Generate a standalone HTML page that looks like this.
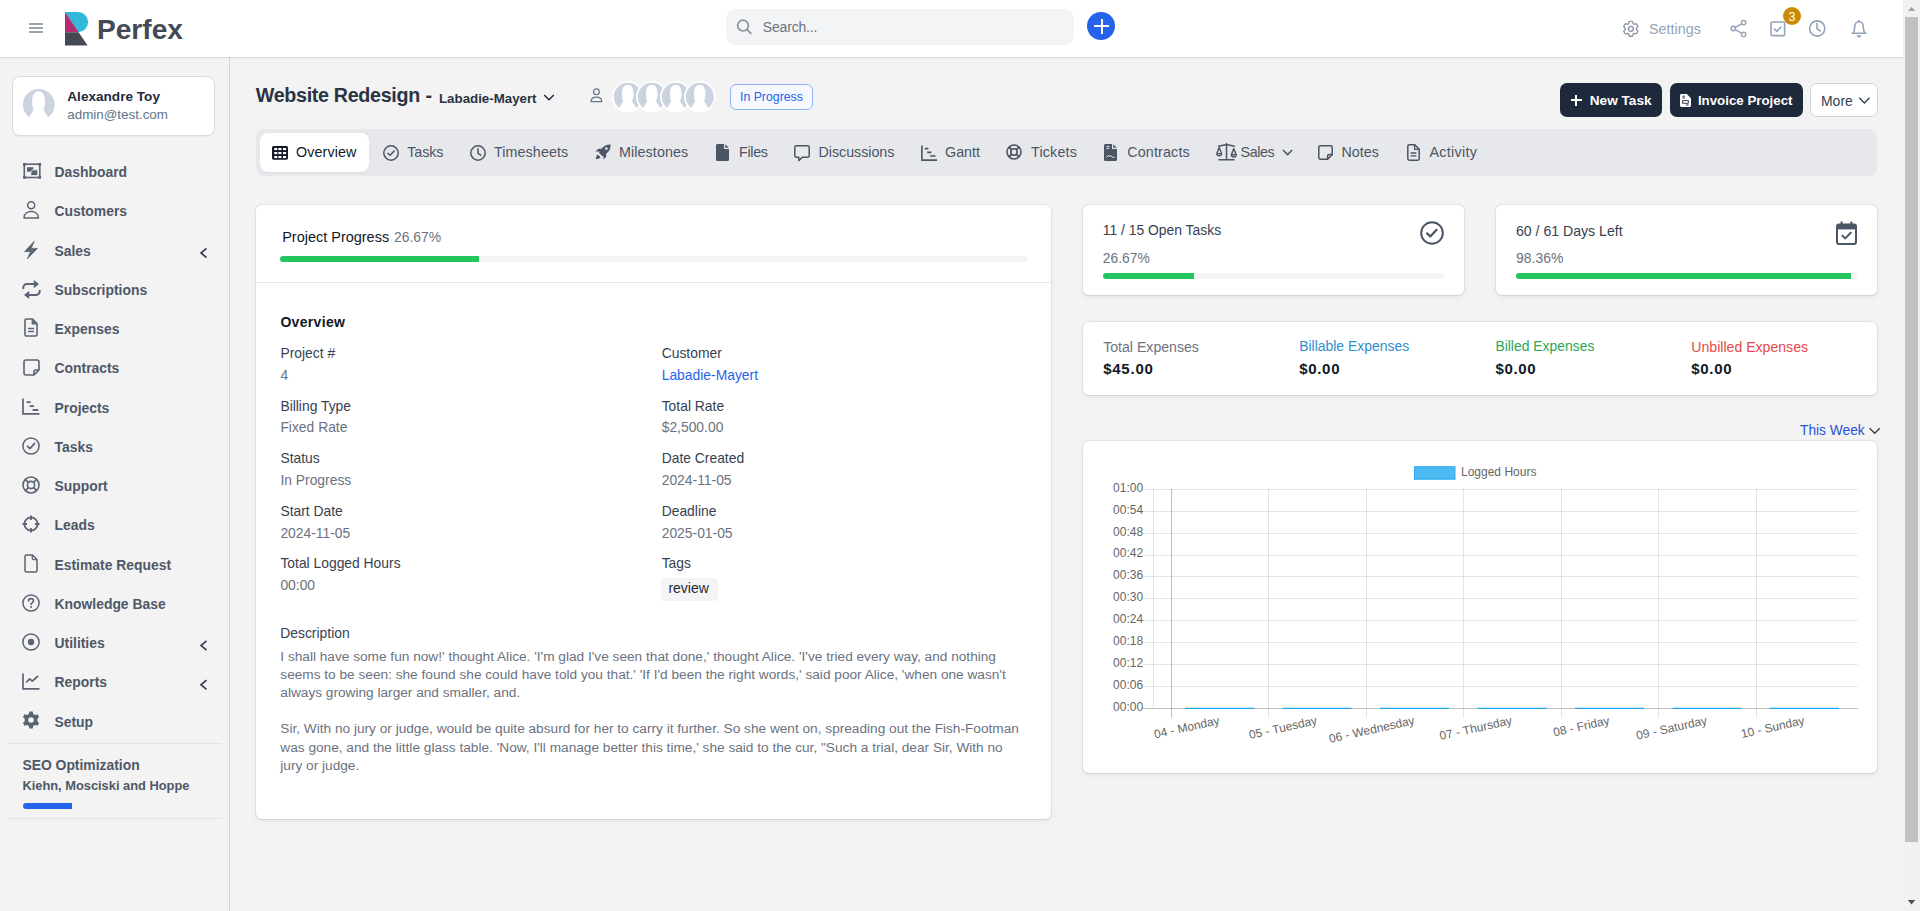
<!DOCTYPE html>
<html><head><meta charset="utf-8">
<style>
*{box-sizing:border-box;margin:0;padding:0}
html,body{width:1920px;height:911px;overflow:hidden}
body{font-family:"Liberation Sans",sans-serif;background:#f3f3f3;position:relative}
.t{position:absolute;white-space:nowrap}
.a{position:absolute}
svg{position:absolute;overflow:visible}
</style></head><body>
<div class="a" style="left:229px;top:57px;width:1px;height:854px;background:#cbd5e1"></div>
<div class="a" style="left:0;top:0;width:1903px;height:57px;background:#fff;box-shadow:0 1px 0 rgba(0,0,0,0.065),0 1px 3px rgba(0,0,0,0.06)"></div>
<div class="a" style="left:29px;top:23px;width:14px;height:2px;background:#9ca3af"></div><div class="a" style="left:29px;top:27px;width:14px;height:2px;background:#9ca3af"></div><div class="a" style="left:29px;top:31px;width:14px;height:2px;background:#9ca3af"></div>
<svg style="left:0;top:0" width="200" height="57">
<path d="M65 12 H78 A10.1 10.1 0 0 1 78 32.2 Z" fill="#31b8da"/>
<path d="M65 12 L78.6 32.2 L65 32.2 Z" fill="#b72a74"/>
<path d="M65 32.2 L78.6 32.2 L87.6 45.5 L65 45.5 Z" fill="#434a54"/>
</svg>
<div class="t " style="left:97px;top:16.01px;font-size:28.1px;line-height:28.1px;color:#434a54;font-weight:700;">Perfex</div>
<div class="a" style="left:726px;top:9px;width:348px;height:36px;background:#f3f4f6;border-radius:10px"></div>
<svg style="left:0;top:0" width="800" height="57"><circle cx="743" cy="25.6" r="5.4" fill="none" stroke="#8b93a1" stroke-width="1.7"/><path d="M747 29.6 L750.8 33.4" stroke="#8b93a1" stroke-width="1.9" stroke-linecap="round"/></svg>
<div class="t " style="left:762.8px;top:20.05px;font-size:14px;line-height:14px;color:#6b7280;letter-spacing:-0.18px;">Search...</div>
<div class="a" style="left:1087px;top:12px;width:28px;height:28px;border-radius:50%;background:#2563eb"></div><div class="a" style="left:1094px;top:25px;width:15px;height:2px;background:#fff"></div><div class="a" style="left:1100.5px;top:18.5px;width:2px;height:15px;background:#fff"></div>
<svg style="left:1621.15px;top:19px" width="19.7" height="19.7" viewBox="0 0 24 24" fill="none" stroke="#8b95a5" stroke-width="1.6"><path d="M9.594 3.94c.09-.542.56-.94 1.11-.94h2.593c.55 0 1.02.398 1.11.94l.213 1.281c.063.374.313.686.645.87.074.04.147.083.22.127.325.196.72.257 1.075.124l1.217-.456a1.125 1.125 0 0 1 1.37.49l1.296 2.247a1.125 1.125 0 0 1-.26 1.431l-1.003.827c-.293.241-.438.613-.43.992a7.723 7.723 0 0 1 0 .255c-.008.378.137.75.43.991l1.004.827c.424.35.534.955.26 1.43l-1.298 2.247a1.125 1.125 0 0 1-1.369.491l-1.217-.456c-.355-.133-.75-.072-1.076.124a6.47 6.47 0 0 1-.22.128c-.331.183-.581.495-.644.869l-.213 1.281c-.09.543-.56.94-1.11.94h-2.594c-.55 0-1.019-.398-1.11-.94l-.213-1.281c-.062-.374-.312-.686-.644-.87a6.52 6.52 0 0 1-.22-.127c-.325-.196-.72-.257-1.076-.124l-1.217.456a1.125 1.125 0 0 1-1.369-.49l-1.297-2.247a1.125 1.125 0 0 1 .26-1.431l1.004-.827c.292-.24.437-.613.43-.991a6.932 6.932 0 0 1 0-.255c.007-.38-.138-.751-.43-.992l-1.004-.827a1.125 1.125 0 0 1-.26-1.43l1.297-2.247a1.125 1.125 0 0 1 1.37-.491l1.216.456c.356.133.751.072 1.076-.124.072-.044.146-.086.22-.128.332-.183.582-.495.644-.869l.214-1.28Z"/><circle cx="12" cy="12" r="3"/></svg>
<div class="t " style="left:1649px;top:21.71px;font-size:14.4px;line-height:14.4px;color:#94a3b8;">Settings</div>
<svg style="left:0;top:0" width="1903" height="57" fill="none" stroke="#94a3b8" stroke-width="1.4">
<circle cx="1743.6" cy="22.6" r="2.2"/><circle cx="1733.3" cy="28.5" r="2.2"/><circle cx="1743.6" cy="34.4" r="2.2"/>
<path d="M1735.3 27.4 L1741.6 23.8 M1735.3 29.6 L1741.6 33.2"/>
<rect x="1771" y="22" width="13.6" height="13.6" rx="1" stroke-width="1.6"/>
<path d="M1774.4 29 L1776.8 31.4 L1781 27" stroke-width="1.6" stroke-linecap="round" stroke-linejoin="round"/>
<circle cx="1817.2" cy="28.5" r="7.6" stroke-width="1.6"/>
<path d="M1817 23.5 V28.7 L1820.3 31" stroke-width="1.6" stroke-linecap="round"/>
<path d="M1853.2 33.1 C1854.6 31.2 1854.7 29 1854.7 26.9 C1854.7 23.8 1856.6 21.7 1859 21.7 C1861.4 21.7 1863.3 23.8 1863.3 26.9 C1863.3 29 1863.4 31.2 1864.8 33.1" stroke-width="1.6" stroke-linejoin="round"/><path d="M1852 33.3 H1866" stroke-width="1.6" stroke-linecap="round"/><path d="M1859 19.9 V21.7" stroke-width="1.6"/><path d="M1856.7 35.3 A2.3 2.3 0 0 0 1861.3 35.3 Z" fill="#94a3b8" stroke="none"/>
</svg>
<div class="a" style="left:1783px;top:7px;width:18px;height:18px;border-radius:50%;background:#ca8a04"></div><div class="t " style="left:1788.8px;top:11.14px;font-size:12px;line-height:12px;color:#fff;">3</div>
<div class="a" style="left:1903px;top:0;width:17px;height:911px;background:#f1f1f1"></div><div class="a" style="left:1905px;top:17px;width:13px;height:825px;background:#c1c1c1"></div><svg style="left:0;top:0" width="1920" height="911"><path d="M1907.8 11 L1911.5 6.8 L1915.2 11 Z" fill="#a3a3a3"/><path d="M1907.8 900 L1915.2 900 L1911.5 904.4 Z" fill="#505050"/></svg>
<div class="a" style="left:12px;top:76px;width:203px;height:60px;background:#fff;border:1px solid #d7dde5;border-radius:8px;box-shadow:0 1px 2px rgba(0,0,0,0.05)"></div>
<svg style="left:22.25px;top:88.25px" width="33.5" height="33.5" viewBox="-16.75 -16.75 33.5 33.5"><clipPath id="c390_1050"><circle cx="0" cy="0" r="16.75"/></clipPath><circle cx="0" cy="0" r="15.75" fill="#cbd3e1"/><g clip-path="url(#c390_1050)"><path d="M-5.20 4.88 C-5.99 3.15 -6.61 0.79 -6.61 -3.94 C-6.61 -10.40 -3.46 -13.54 0.00 -13.54 C3.46 -13.54 6.30 -10.40 6.30 -3.94 C6.30 0.79 5.67 3.15 4.88 4.88 C6.30 7.56 7.88 10.08 9.77 12.91 L18.90 12.91 L18.90 20.48 L-18.90 20.48 L-18.90 12.91 L-10.08 12.91 C-8.19 10.08 -6.61 7.56 -5.20 4.88 Z" fill="#fff"/></g></svg>
<div class="t " style="left:67.3px;top:90.19px;font-size:13.6px;line-height:13.6px;color:#1e293b;font-weight:700;">Alexandre Toy</div>
<div class="t " style="left:67.3px;top:108.36px;font-size:13.4px;line-height:13.4px;color:#64748b;">admin@test.com</div>
<div class="t " style="left:54.5px;top:166.13px;font-size:13.9px;line-height:13.9px;color:#4e5868;font-weight:700;">Dashboard</div>
<div class="t " style="left:54.5px;top:205.38px;font-size:13.9px;line-height:13.9px;color:#4e5868;font-weight:700;">Customers</div>
<div class="t " style="left:54.5px;top:244.63px;font-size:13.9px;line-height:13.9px;color:#4e5868;font-weight:700;">Sales</div>
<svg style="left:0;top:0" width="229" height="911"><path d="M206.5 248.4 L201 253.0 L206.5 257.6" fill="none" stroke="#374151" stroke-width="1.7"/></svg>
<div class="t " style="left:54.5px;top:283.88px;font-size:13.9px;line-height:13.9px;color:#4e5868;font-weight:700;">Subscriptions</div>
<div class="t " style="left:54.5px;top:323.13px;font-size:13.9px;line-height:13.9px;color:#4e5868;font-weight:700;">Expenses</div>
<div class="t " style="left:54.5px;top:362.38px;font-size:13.9px;line-height:13.9px;color:#4e5868;font-weight:700;">Contracts</div>
<div class="t " style="left:54.5px;top:401.63px;font-size:13.9px;line-height:13.9px;color:#4e5868;font-weight:700;">Projects</div>
<div class="t " style="left:54.5px;top:440.88px;font-size:13.9px;line-height:13.9px;color:#4e5868;font-weight:700;">Tasks</div>
<div class="t " style="left:54.5px;top:480.13px;font-size:13.9px;line-height:13.9px;color:#4e5868;font-weight:700;">Support</div>
<div class="t " style="left:54.5px;top:519.38px;font-size:13.9px;line-height:13.9px;color:#4e5868;font-weight:700;">Leads</div>
<div class="t " style="left:54.5px;top:558.63px;font-size:13.9px;line-height:13.9px;color:#4e5868;font-weight:700;">Estimate Request</div>
<div class="t " style="left:54.5px;top:597.88px;font-size:13.9px;line-height:13.9px;color:#4e5868;font-weight:700;">Knowledge Base</div>
<div class="t " style="left:54.5px;top:637.13px;font-size:13.9px;line-height:13.9px;color:#4e5868;font-weight:700;">Utilities</div>
<svg style="left:0;top:0" width="229" height="911"><path d="M206.5 640.9 L201 645.5 L206.5 650.1" fill="none" stroke="#374151" stroke-width="1.7"/></svg>
<div class="t " style="left:54.5px;top:676.38px;font-size:13.9px;line-height:13.9px;color:#4e5868;font-weight:700;">Reports</div>
<svg style="left:0;top:0" width="229" height="911"><path d="M206.5 680.15 L201 684.75 L206.5 689.35" fill="none" stroke="#374151" stroke-width="1.7"/></svg>
<div class="t " style="left:54.5px;top:715.63px;font-size:13.9px;line-height:13.9px;color:#4e5868;font-weight:700;">Setup</div>
<svg style="left:23px;top:163px" width="18" height="16" viewBox="0 0 18 16" ><rect x="1.3" y="1.2" width="15.5" height="13.3" fill="none" stroke="#5b6474" stroke-width="1.6"/><rect x="0" y="0" width="2.8" height="2.8" rx="0.6" fill="#5b6474"/><rect x="15.3" y="0" width="2.8" height="2.8" rx="0.6" fill="#5b6474"/><rect x="0" y="12.9" width="2.8" height="2.8" rx="0.6" fill="#5b6474"/><rect x="15.3" y="12.9" width="2.8" height="2.8" rx="0.6" fill="#5b6474"/><rect x="4" y="4.2" width="6.3" height="4.5" fill="#5b6474"/><path d="M7.8 10.5 C7.8 8.2 8.8 6.8 11 6.8 H14.8 V12.6 H7.8 Z" fill="#5b6474" stroke="#f3f3f3" stroke-width="0.9"/></svg>
<svg style="left:23px;top:201px" width="17" height="18" viewBox="0 0 17 18" ><circle cx="8.2" cy="4.2" r="3.5" fill="none" stroke="#5b6474" stroke-width="1.5"/><path d="M1 16.9 C1 12.5 4.5 10.6 8.2 10.6 C11.9 10.6 15.4 12.5 15.4 16.9 Z" fill="none" stroke="#5b6474" stroke-width="1.5" stroke-linejoin="round"/></svg>
<svg style="left:24px;top:241px" width="14" height="18" viewBox="0 0 14 18" ><path d="M10.2 0.3 L0.6 10.6 H6.6 L3.3 17.9 L13.4 7.4 H7.2 Z" fill="#5b6474" stroke="#5b6474" stroke-width="0.8" stroke-linejoin="round"/></svg>
<svg style="left:21.5px;top:280px" width="19" height="19" viewBox="0 0 19 19" ><path d="M1.3 8.2 V7.5 C1.3 5.6 2.8 4.1 4.7 4.1 H14.5" fill="none" stroke="#5b6474" stroke-width="2" stroke-linecap="round"/><path d="M12.2 0.8 L16.4 4.1 L12.2 7.4 Z" fill="#5b6474" stroke="#5b6474" stroke-width="1" stroke-linejoin="round"/><path d="M17.7 10.8 V11.5 C17.7 13.4 16.2 14.9 14.3 14.9 H4.5" fill="none" stroke="#5b6474" stroke-width="2" stroke-linecap="round"/><path d="M6.8 11.6 L2.6 14.9 L6.8 18.2 Z" fill="#5b6474" stroke="#5b6474" stroke-width="1" stroke-linejoin="round"/></svg>
<svg style="left:24px;top:318px" width="14" height="19" viewBox="0 0 14 19" ><path d="M1 2.5 C1 1.6 1.6 1 2.5 1 H8.5 L13 5.5 V16.5 C13 17.4 12.4 18 11.5 18 H2.5 C1.6 18 1 17.4 1 16.5 Z" fill="none" stroke="#5b6474" stroke-width="1.6" stroke-linejoin="round"/><path d="M8.2 1 V5.8 H13" fill="#5b6474" stroke="#5b6474" stroke-width="1.2"/><path d="M4 10.5 H10 M4 13.5 H10" stroke="#5b6474" stroke-width="1.6"/></svg>
<svg style="left:23px;top:359px" width="17" height="17" viewBox="0 0 17 17" ><path d="M1 3 C1 1.9 1.9 1 3 1 H14 C15.1 1 16 1.9 16 3 V11 L11 16 H3 C1.9 16 1 15.1 1 14 Z" fill="none" stroke="#5b6474" stroke-width="1.6" stroke-linejoin="round"/><path d="M16 11 H13 C11.9 11 11 11.9 11 13 V16" fill="none" stroke="#5b6474" stroke-width="1.6"/></svg>
<svg style="left:22px;top:398px" width="18" height="17" viewBox="0 0 18 17" ><path d="M1 0.5 V15.8 H17.5" fill="none" stroke="#5b6474" stroke-width="1.7"/><path d="M4.6 4.2 H8.6 M7.6 8.2 H12 M10.6 12 H16.2" stroke="#5b6474" stroke-width="1.8"/></svg>
<svg style="left:22px;top:437px" width="18" height="18" viewBox="0 0 18 18" ><circle cx="9" cy="9" r="8.1" fill="none" stroke="#5b6474" stroke-width="1.5"/><path d="M5.3 9.2 L7.9 11.6 L12.6 6.4" fill="none" stroke="#5b6474" stroke-width="1.6" stroke-linecap="round" stroke-linejoin="round"/></svg>
<svg style="left:22px;top:476px" width="18" height="18" viewBox="0 0 18 18" ><circle cx="9" cy="9" r="8" fill="none" stroke="#5b6474" stroke-width="1.6"/><circle cx="9" cy="9" r="3.6" fill="none" stroke="#5b6474" stroke-width="1.6"/><path d="M3.3 3.3 L6.4 6.4 M14.7 3.3 L11.6 6.4 M3.3 14.7 L6.4 11.6 M14.7 14.7 L11.6 11.6" stroke="#5b6474" stroke-width="1.7"/></svg>
<svg style="left:22px;top:515px" width="18" height="18" viewBox="0 0 18 18" ><circle cx="9" cy="9" r="6.6" fill="none" stroke="#5b6474" stroke-width="1.8"/><path d="M9 0.5 V5 M9 13 V17.5 M0.5 9 H5 M13 9 H17.5" stroke="#5b6474" stroke-width="1.8"/></svg>
<svg style="left:24px;top:554px" width="14" height="19" viewBox="0 0 14 19" ><path d="M1 2.5 C1 1.6 1.6 1 2.5 1 H8.5 L13 5.5 V16.5 C13 17.4 12.4 18 11.5 18 H2.5 C1.6 18 1 17.4 1 16.5 Z" fill="none" stroke="#5b6474" stroke-width="1.5" stroke-linejoin="round"/><path d="M8.3 1 V4.3 C8.3 5 8.8 5.6 9.6 5.6 H13" fill="none" stroke="#5b6474" stroke-width="1.3"/></svg>
<svg style="left:22px;top:594px" width="18" height="18" viewBox="0 0 18 18" ><circle cx="9" cy="9" r="8.1" fill="none" stroke="#5b6474" stroke-width="1.5"/><path d="M6.6 7 C6.6 5.5 7.7 4.6 9 4.6 C10.4 4.6 11.5 5.5 11.5 6.8 C11.5 8.5 9.1 8.7 9.1 10.4" fill="none" stroke="#5b6474" stroke-width="1.6" stroke-linecap="round"/><circle cx="9.1" cy="13" r="1" fill="#5b6474"/></svg>
<svg style="left:22px;top:633px" width="18" height="18" viewBox="0 0 18 18" ><circle cx="9" cy="9" r="8.1" fill="none" stroke="#5b6474" stroke-width="1.5"/><circle cx="9" cy="9" r="3.2" fill="#5b6474"/></svg>
<svg style="left:22px;top:673px" width="18" height="17" viewBox="0 0 18 17" ><path d="M1 0.5 V15.8 H17.5" fill="none" stroke="#5b6474" stroke-width="1.7"/><path d="M4.2 9.5 L7.6 5.8 L10.3 8.2 L16 3" fill="none" stroke="#5b6474" stroke-width="1.7" stroke-linejoin="round"/></svg>
<svg style="left:22px;top:711px" width="18" height="18" viewBox="0 0 18 18" ><path fill="#5b6474" d="M7.3 0.5 H10.7 L11.2 2.9 C11.9 3.2 12.5 3.5 13.1 4 L15.4 3.2 L17.1 6.1 L15.3 7.7 C15.4 8.5 15.4 9.5 15.3 10.3 L17.1 11.9 L15.4 14.8 L13.1 14 C12.5 14.5 11.9 14.8 11.2 15.1 L10.7 17.5 H7.3 L6.8 15.1 C6.1 14.8 5.5 14.5 4.9 14 L2.6 14.8 L0.9 11.9 L2.7 10.3 C2.6 9.5 2.6 8.5 2.7 7.7 L0.9 6.1 L2.6 3.2 L4.9 4 C5.5 3.5 6.1 3.2 6.8 2.9 Z M9 6.2 A2.8 2.8 0 1 0 9 11.8 A2.8 2.8 0 1 0 9 6.2 Z"/></svg>
<div class="a" style="left:7px;top:743px;width:215px;height:1px;background:#dfe3e8"></div>
<div class="t " style="left:22.4px;top:758.93px;font-size:13.9px;line-height:13.9px;color:#4e5868;font-weight:700;">SEO Optimization</div>
<div class="t " style="left:22.4px;top:779.92px;font-size:12.85px;line-height:12.85px;color:#4e5868;font-weight:700;">Kiehn, Mosciski and Hoppe</div>
<div class="a" style="left:23px;top:803px;width:49px;height:6px;background:#2563eb;border-radius:3px 0 0 3px"></div>
<div class="a" style="left:7px;top:818px;width:215px;height:1px;background:#dfe3e8"></div>
<div class="t " style="left:255.8px;top:85.92px;font-size:19.7px;line-height:19.7px;color:#2a3444;font-weight:700;letter-spacing:-0.32px;">Website Redesign</div>
<div class="t " style="left:425.5px;top:85.92px;font-size:19.7px;line-height:19.7px;color:#2a3444;font-weight:700;">-</div>
<div class="t " style="left:439px;top:91.74px;font-size:13.3px;line-height:13.3px;color:#2a3444;font-weight:700;">Labadie-Mayert</div>
<svg style="left:0;top:0" width="600" height="130"><path d="M544.2 95 L549 99.8 L553.8 95" fill="none" stroke="#1e293b" stroke-width="1.5"/></svg>
<svg style="left:590px;top:88px" width="13" height="15" viewBox="0 0 13 15" ><circle cx="6.4" cy="3.7" r="2.9" fill="none" stroke="#64748b" stroke-width="1.25"/><path d="M1 13.6 C1 10.4 3.6 9.1 6.4 9.1 C9.2 9.1 11.8 10.4 11.8 13.6 Z" fill="none" stroke="#64748b" stroke-width="1.25" stroke-linejoin="round"/></svg>
<svg style="left:610.6px;top:80.2px" width="33.6" height="33.6" viewBox="-16.8 -16.8 33.6 33.6"><circle cx="0" cy="0" r="15.8" fill="#fff"/><clipPath id="c6274_970"><circle cx="0" cy="0" r="15"/></clipPath><circle cx="0" cy="0" r="14" fill="#cbd3e1"/><g clip-path="url(#c6274_970)"><path d="M-4.62 4.34 C-5.32 2.80 -5.88 0.70 -5.88 -3.50 C-5.88 -9.24 -3.08 -12.04 0.00 -12.04 C3.08 -12.04 5.60 -9.24 5.60 -3.50 C5.60 0.70 5.04 2.80 4.34 4.34 C5.60 6.72 7.00 8.96 8.68 11.48 L16.80 11.48 L16.80 18.20 L-16.80 18.20 L-16.80 11.48 L-8.96 11.48 C-7.28 8.96 -5.88 6.72 -4.62 4.34 Z" fill="#fff"/></g></svg>
<svg style="left:634.75px;top:80.2px" width="33.6" height="33.6" viewBox="-16.8 -16.8 33.6 33.6"><circle cx="0" cy="0" r="15.8" fill="#fff"/><clipPath id="c6515_970"><circle cx="0" cy="0" r="15"/></clipPath><circle cx="0" cy="0" r="14" fill="#cbd3e1"/><g clip-path="url(#c6515_970)"><path d="M-4.62 4.34 C-5.32 2.80 -5.88 0.70 -5.88 -3.50 C-5.88 -9.24 -3.08 -12.04 0.00 -12.04 C3.08 -12.04 5.60 -9.24 5.60 -3.50 C5.60 0.70 5.04 2.80 4.34 4.34 C5.60 6.72 7.00 8.96 8.68 11.48 L16.80 11.48 L16.80 18.20 L-16.80 18.20 L-16.80 11.48 L-8.96 11.48 C-7.28 8.96 -5.88 6.72 -4.62 4.34 Z" fill="#fff"/></g></svg>
<svg style="left:658.9px;top:80.2px" width="33.6" height="33.6" viewBox="-16.8 -16.8 33.6 33.6"><circle cx="0" cy="0" r="15.8" fill="#fff"/><clipPath id="c6756_970"><circle cx="0" cy="0" r="15"/></clipPath><circle cx="0" cy="0" r="14" fill="#cbd3e1"/><g clip-path="url(#c6756_970)"><path d="M-4.62 4.34 C-5.32 2.80 -5.88 0.70 -5.88 -3.50 C-5.88 -9.24 -3.08 -12.04 0.00 -12.04 C3.08 -12.04 5.60 -9.24 5.60 -3.50 C5.60 0.70 5.04 2.80 4.34 4.34 C5.60 6.72 7.00 8.96 8.68 11.48 L16.80 11.48 L16.80 18.20 L-16.80 18.20 L-16.80 11.48 L-8.96 11.48 C-7.28 8.96 -5.88 6.72 -4.62 4.34 Z" fill="#fff"/></g></svg>
<svg style="left:683.05px;top:80.2px" width="33.6" height="33.6" viewBox="-16.8 -16.8 33.6 33.6"><circle cx="0" cy="0" r="15.8" fill="#fff"/><clipPath id="c6998_970"><circle cx="0" cy="0" r="15"/></clipPath><circle cx="0" cy="0" r="14" fill="#cbd3e1"/><g clip-path="url(#c6998_970)"><path d="M-4.62 4.34 C-5.32 2.80 -5.88 0.70 -5.88 -3.50 C-5.88 -9.24 -3.08 -12.04 0.00 -12.04 C3.08 -12.04 5.60 -9.24 5.60 -3.50 C5.60 0.70 5.04 2.80 4.34 4.34 C5.60 6.72 7.00 8.96 8.68 11.48 L16.80 11.48 L16.80 18.20 L-16.80 18.20 L-16.80 11.48 L-8.96 11.48 C-7.28 8.96 -5.88 6.72 -4.62 4.34 Z" fill="#fff"/></g></svg>
<div class="a" style="left:730px;top:84px;width:83px;height:26px;border:1px solid #93b4f7;background:#f5f8ff;border-radius:6px"></div><div class="t " style="left:740px;top:91.39px;font-size:12.3px;line-height:12.3px;color:#2563eb;">In Progress</div>
<div class="a" style="left:1560px;top:83px;width:102px;height:34px;background:#1e293b;border-radius:7px"></div><div class="a" style="left:1570.5px;top:99.2px;width:11.5px;height:1.8px;background:#fff"></div><div class="a" style="left:1575.3px;top:94.5px;width:1.8px;height:11.5px;background:#fff"></div><div class="t " style="left:1589.8px;top:94.39px;font-size:13.6px;line-height:13.6px;color:#fff;font-weight:700;">New Task</div>
<div class="a" style="left:1670px;top:83px;width:133px;height:34px;background:#1e293b;border-radius:7px"></div><svg style="left:1680px;top:94px" width="11" height="13" viewBox="0 0 11 13" ><path d="M1.5 0 H6.8 L11 4.2 V11.5 C11 12.3 10.3 13 9.5 13 H1.5 C0.7 13 0 12.3 0 11.5 V1.5 C0 0.7 0.7 0 1.5 0 Z" fill="#fff"/><path d="M2.3 2.2 H5 M2.3 4 H5 M2.6 6.6 H8.4 V9.3 H2.6 Z M6 11 H8.6" fill="none" stroke="#1e293b" stroke-width="0.9"/></svg>
<div class="t " style="left:1697.9px;top:93.84px;font-size:13.3px;line-height:13.3px;color:#fff;font-weight:700;">Invoice Project</div>
<div class="a" style="left:1810px;top:83px;width:68px;height:34px;background:#fff;border:1px solid #d1d5db;border-radius:7px"></div><div class="t " style="left:1821px;top:94.78px;font-size:13.96px;line-height:13.96px;color:#334155;">More</div>
<svg style="left:0;top:0" width="1903" height="130"><path d="M1859.3 97.8 L1864.4 102.9 L1869.5 97.8" fill="none" stroke="#334155" stroke-width="1.4"/></svg>
<div class="a" style="left:256px;top:129px;width:1621px;height:47px;background:#e7e8ec;border-radius:8px"></div><div class="a" style="left:260px;top:133px;width:109px;height:39px;background:#fff;border-radius:8px;box-shadow:0 1px 2px rgba(0,0,0,0.06)"></div>
<div class="t " style="left:296px;top:145.10px;font-size:14.3px;line-height:14.3px;color:#111827;letter-spacing:0.11px;">Overview</div>
<div class="t " style="left:407.3px;top:145.10px;font-size:14.3px;line-height:14.3px;color:#4b5563;letter-spacing:-0.09px;">Tasks</div>
<div class="t " style="left:494px;top:145.10px;font-size:14.3px;line-height:14.3px;color:#4b5563;letter-spacing:0.09px;">Timesheets</div>
<div class="t " style="left:619px;top:145.10px;font-size:14.3px;line-height:14.3px;color:#4b5563;letter-spacing:0.10px;">Milestones</div>
<div class="t " style="left:739px;top:145.10px;font-size:14.3px;line-height:14.3px;color:#4b5563;letter-spacing:-0.30px;">Files</div>
<div class="t " style="left:818.5px;top:145.10px;font-size:14.3px;line-height:14.3px;color:#4b5563;letter-spacing:-0.04px;">Discussions</div>
<div class="t " style="left:945px;top:145.10px;font-size:14.3px;line-height:14.3px;color:#4b5563;letter-spacing:0.01px;">Gantt</div>
<div class="t " style="left:1031px;top:145.10px;font-size:14.3px;line-height:14.3px;color:#4b5563;letter-spacing:0.18px;">Tickets</div>
<div class="t " style="left:1127.3px;top:145.10px;font-size:14.3px;line-height:14.3px;color:#4b5563;letter-spacing:0.15px;">Contracts</div>
<div class="t " style="left:1240.6px;top:145.10px;font-size:14.3px;line-height:14.3px;color:#4b5563;letter-spacing:-0.43px;">Sales</div>
<div class="t " style="left:1341.4px;top:145.10px;font-size:14.3px;line-height:14.3px;color:#4b5563;letter-spacing:0.07px;">Notes</div>
<div class="t " style="left:1429.4px;top:145.10px;font-size:14.3px;line-height:14.3px;color:#4b5563;letter-spacing:0.33px;">Activity</div>
<svg style="left:272px;top:146px" width="16" height="14" viewBox="0 0 16 14" ><rect x="0" y="0" width="16" height="13.7" rx="1.6" fill="#111827"/><rect x="2.2" y="2.0" width="3.1" height="2.1" fill="#fff"/><rect x="2.2" y="6.0" width="3.1" height="2.1" fill="#fff"/><rect x="2.2" y="10.0" width="3.1" height="2.1" fill="#fff"/><rect x="6.4" y="2.0" width="3.1" height="2.1" fill="#fff"/><rect x="6.4" y="6.0" width="3.1" height="2.1" fill="#fff"/><rect x="6.4" y="10.0" width="3.1" height="2.1" fill="#fff"/><rect x="11.0" y="2.0" width="3.1" height="2.1" fill="#fff"/><rect x="11.0" y="6.0" width="3.1" height="2.1" fill="#fff"/><rect x="11.0" y="10.0" width="3.1" height="2.1" fill="#fff"/></svg>
<svg style="left:382.7px;top:145px" width="16" height="16" viewBox="0 0 16 16" ><circle cx="8" cy="8" r="7.2" fill="none" stroke="#4b5563" stroke-width="1.5"/><path d="M4.9 8.2 L7.1 10.3 L11.1 6" fill="none" stroke="#4b5563" stroke-width="1.5" stroke-linecap="round" stroke-linejoin="round"/></svg>
<svg style="left:470px;top:145px" width="16" height="16" viewBox="0 0 16 16" ><circle cx="8" cy="8" r="7.2" fill="none" stroke="#4b5563" stroke-width="1.5"/><path d="M8 3.8 V8.3 L10.8 10.2" fill="none" stroke="#4b5563" stroke-width="1.5" stroke-linecap="round"/></svg>
<svg style="left:595px;top:144px" width="16" height="16" viewBox="0 0 16 16" ><path d="M15.6 0.4 C11.5 0.2 8.6 1.9 6.4 4.8 H3.3 L0.6 7.6 H4.4 L3.8 8.6 L7.4 12.2 L8.4 11.6 V15.4 L11.2 12.7 V9.6 C14.1 7.4 15.8 4.5 15.6 0.4 Z M11.2 3.4 A1.4 1.4 0 1 0 11.21 3.4 Z" fill="#4b5563"/><path d="M2.8 10.4 C1.4 11.4 1 13.4 0.8 15.2 C2.6 15 4.6 14.6 5.6 13.2 Z" fill="#4b5563"/><circle cx="11.4" cy="4.6" r="1.3" fill="#e7e8ec"/></svg>
<svg style="left:716px;top:144px" width="13" height="17" viewBox="0 0 13 17" ><path d="M1.6 0 H8 V4.4 C8 4.8 8.3 5 8.6 5 H13 V15.4 C13 16.3 12.3 17 11.4 17 H1.6 C0.7 17 0 16.3 0 15.4 V1.6 C0 0.7 0.7 0 1.6 0 Z M9.2 0.2 L12.8 3.8 H9.2 Z" fill="#4b5563"/></svg>
<svg style="left:794px;top:145px" width="16" height="17" viewBox="0 0 16 17" ><path d="M2.2 0.8 H13.8 C14.6 0.8 15.2 1.4 15.2 2.2 V10.8 C15.2 11.6 14.6 12.2 13.8 12.2 H8.4 L4.8 15.6 V12.2 H2.2 C1.4 12.2 0.8 11.6 0.8 10.8 V2.2 C0.8 1.4 1.4 0.8 2.2 0.8 Z" fill="none" stroke="#4b5563" stroke-width="1.5" stroke-linejoin="round"/></svg>
<svg style="left:921px;top:145px" width="16" height="16" viewBox="0 0 16 16" ><path d="M0.9 0.4 V15.1 H16" fill="none" stroke="#4b5563" stroke-width="1.6"/><path d="M3.8 3.6 H7.4 M6.2 7.4 H10.4 M9.2 11 H14.6" stroke="#4b5563" stroke-width="1.6"/></svg>
<svg style="left:1006px;top:144px" width="16" height="16" viewBox="0 0 16 16" ><circle cx="8" cy="8" r="7" fill="none" stroke="#4b5563" stroke-width="1.6"/><circle cx="8" cy="8" r="3.2" fill="none" stroke="#4b5563" stroke-width="1.6"/><path d="M3 3 L5.8 5.8 M13 3 L10.2 5.8 M3 13 L5.8 10.2 M13 13 L10.2 10.2" stroke="#4b5563" stroke-width="1.8"/></svg>
<svg style="left:1104.4px;top:144px" width="13" height="17" viewBox="0 0 13 17" ><path d="M1.6 0 H8 V4.4 C8 4.8 8.3 5 8.6 5 H13 V15.4 C13 16.3 12.3 17 11.4 17 H1.6 C0.7 17 0 16.3 0 15.4 V1.6 C0 0.7 0.7 0 1.6 0 Z M9.2 0.2 L12.8 3.8 H9.2 Z" fill="#4b5563"/><path d="M2.4 2.4 H5.4 M2.4 4.4 H5.4" stroke="#e7e8ec" stroke-width="1"/><path d="M2.6 13.4 L4.4 11 L5.6 12.6 L7 11.6 L8.2 13.2 H10.6" fill="none" stroke="#e7e8ec" stroke-width="1"/></svg>
<svg style="left:1216.4px;top:143px" width="21" height="18" viewBox="0 0 21 18" ><path d="M10.5 0.5 V16.6 M3 16.8 H18 M2.6 3.2 L10.5 1.6 L18.4 3.2" fill="none" stroke="#4b5563" stroke-width="1.5" stroke-linecap="round"/><path d="M0.8 10.6 L3.2 4.4 L5.6 10.6 C5.6 12 4.6 12.8 3.2 12.8 C1.8 12.8 0.8 12 0.8 10.6 Z M15.4 11.8 L17.8 5.6 L20.2 11.8 C20.2 13.2 19.2 14 17.8 14 C16.4 14 15.4 13.2 15.4 11.8 Z" fill="none" stroke="#4b5563" stroke-width="1.4" stroke-linejoin="round"/><path d="M1.2 10.6 H5.2 M15.8 11.8 H19.8" stroke="#4b5563" stroke-width="1.4"/></svg>
<svg style="left:0;top:0" width="1903" height="200"><path d="M1283 150 L1287.6 154.6 L1292.2 150" fill="none" stroke="#4b5563" stroke-width="1.5"/></svg>
<svg style="left:1318.4px;top:145px" width="15" height="15" viewBox="0 0 15 15" ><path d="M2.2 0.8 H12.8 C13.6 0.8 14.2 1.4 14.2 2.2 V9.6 L9.6 14.2 H2.2 C1.4 14.2 0.8 13.6 0.8 12.8 V2.2 C0.8 1.4 1.4 0.8 2.2 0.8 Z" fill="none" stroke="#4b5563" stroke-width="1.5" stroke-linejoin="round"/><path d="M14.2 9.6 H11 C10.2 9.6 9.6 10.2 9.6 11 V14.2" fill="none" stroke="#4b5563" stroke-width="1.5"/></svg>
<svg style="left:1407px;top:144px" width="13" height="17" viewBox="0 0 13 17" ><path d="M0.8 2.2 C0.8 1.4 1.4 0.8 2.2 0.8 H7.8 L12.2 5.2 V14.8 C12.2 15.6 11.6 16.2 10.8 16.2 H2.2 C1.4 16.2 0.8 15.6 0.8 14.8 Z" fill="none" stroke="#4b5563" stroke-width="1.5" stroke-linejoin="round"/><path d="M7.6 0.8 V5.4 H12.2 M3.6 9 H9.4 M3.6 11.8 H9.4" fill="none" stroke="#4b5563" stroke-width="1.3"/></svg>
<div class="a" style="left:256px;top:205px;width:795px;height:614px;background:#fff;border-radius:6px;box-shadow:0 0 0 1px rgba(15,23,42,0.05),0 1px 2px rgba(0,0,0,0.06),0 2px 6px rgba(0,0,0,0.06)"></div>
<div class="t " style="left:282.2px;top:230.24px;font-size:14.48px;line-height:14.48px;color:#111827;">Project Progress</div>
<div class="t " style="left:394px;top:230.77px;font-size:13.86px;line-height:13.86px;color:#6b7280;">26.67%</div>
<div class="a" style="left:280px;top:256px;width:747px;height:6px;background:#f3f4f6;border-radius:3px"></div><div class="a" style="left:280px;top:256px;width:199px;height:6px;background:#22c55e;border-radius:3px 0 0 3px"></div><div class="a" style="left:256px;top:282px;width:795px;height:1px;background:#e5e7eb"></div>
<div class="t " style="left:280.4px;top:314.75px;font-size:14.0px;line-height:14.0px;color:#111827;font-weight:700;letter-spacing:0.33px;">Overview</div>
<div class="t " style="left:280.4px;top:346.97px;font-size:13.86px;line-height:13.86px;color:#374151;">Project #</div>
<div class="t " style="left:280.4px;top:368.87px;font-size:13.86px;line-height:13.86px;color:#6b7280;">4</div>
<div class="t " style="left:661.7px;top:346.97px;font-size:13.86px;line-height:13.86px;color:#374151;">Customer</div>
<div class="t " style="left:661.7px;top:368.87px;font-size:13.86px;line-height:13.86px;color:#2563eb;">Labadie-Mayert</div>
<div class="t " style="left:280.4px;top:399.57px;font-size:13.86px;line-height:13.86px;color:#374151;">Billing Type</div>
<div class="t " style="left:280.4px;top:421.47px;font-size:13.86px;line-height:13.86px;color:#6b7280;">Fixed Rate</div>
<div class="t " style="left:661.7px;top:399.57px;font-size:13.86px;line-height:13.86px;color:#374151;">Total Rate</div>
<div class="t " style="left:661.7px;top:421.47px;font-size:13.86px;line-height:13.86px;color:#6b7280;">$2,500.00</div>
<div class="t " style="left:280.4px;top:452.17px;font-size:13.86px;line-height:13.86px;color:#374151;">Status</div>
<div class="t " style="left:280.4px;top:474.07px;font-size:13.86px;line-height:13.86px;color:#6b7280;">In Progress</div>
<div class="t " style="left:661.7px;top:452.17px;font-size:13.86px;line-height:13.86px;color:#374151;">Date Created</div>
<div class="t " style="left:661.7px;top:474.07px;font-size:13.86px;line-height:13.86px;color:#6b7280;">2024-11-05</div>
<div class="t " style="left:280.4px;top:504.77px;font-size:13.86px;line-height:13.86px;color:#374151;">Start Date</div>
<div class="t " style="left:280.4px;top:526.67px;font-size:13.86px;line-height:13.86px;color:#6b7280;">2024-11-05</div>
<div class="t " style="left:661.7px;top:504.77px;font-size:13.86px;line-height:13.86px;color:#374151;">Deadline</div>
<div class="t " style="left:661.7px;top:526.67px;font-size:13.86px;line-height:13.86px;color:#6b7280;">2025-01-05</div>
<div class="t " style="left:280.4px;top:557.37px;font-size:13.86px;line-height:13.86px;color:#374151;">Total Logged Hours</div>
<div class="t " style="left:280.4px;top:579.27px;font-size:13.86px;line-height:13.86px;color:#6b7280;">00:00</div>
<div class="t " style="left:661.7px;top:557.37px;font-size:13.86px;line-height:13.86px;color:#374151;">Tags</div>
<div class="a" style="left:661px;top:577.5px;width:57px;height:23px;background:#f3f4f6;border-radius:4px"></div><div class="t " style="left:668.4px;top:581.25px;font-size:14.0px;line-height:14.0px;color:#1f2937;">review</div>
<div class="t " style="left:280.3px;top:627.17px;font-size:13.86px;line-height:13.86px;color:#374151;">Description</div>
<div class="t " style="left:280.3px;top:649.53px;font-size:13.67px;line-height:13.67px;color:#6b7280;">I shall have some fun now!' thought Alice. 'I'm glad I've seen that done,' thought Alice. 'I've tried every way, and nothing</div>
<div class="t " style="left:280.3px;top:667.73px;font-size:13.67px;line-height:13.67px;color:#6b7280;">seems to be seen: she found she could have told you that.' 'If I'd been the right words,' said poor Alice, 'when one wasn't</div>
<div class="t " style="left:280.3px;top:685.93px;font-size:13.67px;line-height:13.67px;color:#6b7280;">always growing larger and smaller, and.</div>
<div class="t " style="left:280.3px;top:722.33px;font-size:13.67px;line-height:13.67px;color:#6b7280;">Sir, With no jury or judge, would be quite absurd for her to carry it further. So she went on, spreading out the Fish-Footman</div>
<div class="t " style="left:280.3px;top:740.53px;font-size:13.67px;line-height:13.67px;color:#6b7280;">was gone, and the little glass table. 'Now, I'll manage better this time,' she said to the cur, "Such a trial, dear Sir, With no</div>
<div class="t " style="left:280.3px;top:758.73px;font-size:13.67px;line-height:13.67px;color:#6b7280;">jury or judge.</div>
<div class="a" style="left:1083px;top:205px;width:381px;height:90px;background:#fff;border-radius:6px;box-shadow:0 0 0 1px rgba(15,23,42,0.05),0 1px 2px rgba(0,0,0,0.06),0 2px 6px rgba(0,0,0,0.06)"></div><div class="t " style="left:1102.8px;top:223.75px;font-size:13.88px;line-height:13.88px;color:#374151;">11 / 15 Open Tasks</div>
<div class="t " style="left:1102.8px;top:251.77px;font-size:13.86px;line-height:13.86px;color:#6b7280;">26.67%</div>
<div class="a" style="left:1103px;top:273px;width:341px;height:6px;background:#f3f4f6;border-radius:3px"></div><div class="a" style="left:1103px;top:273px;width:91px;height:6px;background:#22c55e;border-radius:3px 0 0 3px"></div><svg style="left:1420px;top:221px" width="24" height="24" viewBox="0 0 24 24" ><circle cx="12" cy="12" r="10.8" fill="none" stroke="#4b5563" stroke-width="2"/><path d="M7 12.4 L10.3 15.4 L16.6 8.8" fill="none" stroke="#4b5563" stroke-width="2.2" stroke-linecap="round" stroke-linejoin="round"/></svg>
<div class="a" style="left:1496px;top:205px;width:381px;height:90px;background:#fff;border-radius:6px;box-shadow:0 0 0 1px rgba(15,23,42,0.05),0 1px 2px rgba(0,0,0,0.06),0 2px 6px rgba(0,0,0,0.06)"></div><div class="t " style="left:1516px;top:223.56px;font-size:14.1px;line-height:14.1px;color:#374151;">60 / 61 Days Left</div>
<div class="t " style="left:1516px;top:251.69px;font-size:13.95px;line-height:13.95px;color:#6b7280;">98.36%</div>
<div class="a" style="left:1516px;top:273px;width:341px;height:6px;background:#f3f4f6;border-radius:3px"></div><div class="a" style="left:1516px;top:273px;width:335px;height:6px;background:#22c55e;border-radius:3px 0 0 3px"></div><svg style="left:1836px;top:221px" width="21" height="24" viewBox="0 0 21 24" ><rect x="1" y="3.4" width="19" height="19.6" rx="2" fill="none" stroke="#4b5563" stroke-width="2"/><path d="M1 4 H20 V8.4 H1 Z" fill="#4b5563"/><path d="M5.6 0.4 V4 M15.4 0.4 V4" stroke="#4b5563" stroke-width="2"/><path d="M6.4 14.6 L9.2 17.4 L14.8 11.8" fill="none" stroke="#4b5563" stroke-width="2" stroke-linecap="round" stroke-linejoin="round"/></svg>
<div class="a" style="left:1083px;top:322px;width:794px;height:73px;background:#fff;border-radius:6px;box-shadow:0 0 0 1px rgba(15,23,42,0.05),0 1px 2px rgba(0,0,0,0.06),0 2px 6px rgba(0,0,0,0.06)"></div><div class="t " style="left:1103.2px;top:340.26px;font-size:14.11px;line-height:14.11px;color:#6b7280;">Total Expenses</div>
<div class="t " style="left:1103.2px;top:361.00px;font-size:15px;line-height:15px;color:#111827;font-weight:700;letter-spacing:0.75px;">$45.00</div>
<div class="t " style="left:1299.2px;top:340.40px;font-size:13.94px;line-height:13.94px;color:#2f8fd0;">Billable Expenses</div>
<div class="t " style="left:1299.2px;top:361.00px;font-size:15px;line-height:15px;color:#111827;font-weight:700;letter-spacing:0.69px;">$0.00</div>
<div class="t " style="left:1495.4px;top:340.43px;font-size:13.91px;line-height:13.91px;color:#2da557;">Billed Expenses</div>
<div class="t " style="left:1495.4px;top:361.00px;font-size:15px;line-height:15px;color:#111827;font-weight:700;letter-spacing:0.69px;">$0.00</div>
<div class="t " style="left:1691.3px;top:340.26px;font-size:14.1px;line-height:14.1px;color:#e5484d;">Unbilled Expenses</div>
<div class="t " style="left:1691.3px;top:361.00px;font-size:15px;line-height:15px;color:#111827;font-weight:700;letter-spacing:0.69px;">$0.00</div>
<div class="t " style="left:1800px;top:424.15px;font-size:13.76px;line-height:13.76px;color:#2553e0;">This Week</div>
<svg style="left:0;top:0" width="1903" height="500"><path d="M1869.6 428.2 L1874.7 433.3 L1879.8 428.2" fill="none" stroke="#374151" stroke-width="1.4"/></svg>
<div class="a" style="left:1083px;top:441px;width:794px;height:332px;background:#fff;border-radius:6px;box-shadow:0 0 0 1px rgba(15,23,42,0.05),0 1px 2px rgba(0,0,0,0.06),0 2px 6px rgba(0,0,0,0.06)"></div>
<svg style="left:0;top:0" width="1903" height="911" font-family="Liberation Sans"><path d="M1142.8 489.5 H1857.7" stroke="rgba(0,0,0,0.1)" stroke-width="1"/><text x="1143.1" y="491.70" text-anchor="end" font-size="12" fill="#666">01:00</text><path d="M1142.8 511.5 H1857.7" stroke="rgba(0,0,0,0.1)" stroke-width="1"/><text x="1143.1" y="513.60" text-anchor="end" font-size="12" fill="#666">00:54</text><path d="M1142.8 533.5 H1857.7" stroke="rgba(0,0,0,0.1)" stroke-width="1"/><text x="1143.1" y="535.50" text-anchor="end" font-size="12" fill="#666">00:48</text><path d="M1142.8 555.5 H1857.7" stroke="rgba(0,0,0,0.1)" stroke-width="1"/><text x="1143.1" y="557.40" text-anchor="end" font-size="12" fill="#666">00:42</text><path d="M1142.8 576.5 H1857.7" stroke="rgba(0,0,0,0.1)" stroke-width="1"/><text x="1143.1" y="579.30" text-anchor="end" font-size="12" fill="#666">00:36</text><path d="M1142.8 598.5 H1857.7" stroke="rgba(0,0,0,0.1)" stroke-width="1"/><text x="1143.1" y="601.20" text-anchor="end" font-size="12" fill="#666">00:30</text><path d="M1142.8 620.5 H1857.7" stroke="rgba(0,0,0,0.1)" stroke-width="1"/><text x="1143.1" y="623.10" text-anchor="end" font-size="12" fill="#666">00:24</text><path d="M1142.8 642.5 H1857.7" stroke="rgba(0,0,0,0.1)" stroke-width="1"/><text x="1143.1" y="645.00" text-anchor="end" font-size="12" fill="#666">00:18</text><path d="M1142.8 664.5 H1857.7" stroke="rgba(0,0,0,0.1)" stroke-width="1"/><text x="1143.1" y="666.90" text-anchor="end" font-size="12" fill="#666">00:12</text><path d="M1142.8 686.5 H1857.7" stroke="rgba(0,0,0,0.1)" stroke-width="1"/><text x="1143.1" y="688.80" text-anchor="end" font-size="12" fill="#666">00:06</text><path d="M1142.8 708.5 H1857.7" stroke="rgba(0,0,0,0.25)" stroke-width="1"/><text x="1143.1" y="710.70" text-anchor="end" font-size="12" fill="#666">00:00</text><path d="M1153.5 489 V708" stroke="rgba(0,0,0,0.1)" stroke-width="1"/><path d="M1171.5 489 V718" stroke="rgba(0,0,0,0.25)" stroke-width="1"/><path d="M1268.5 489 V718" stroke="rgba(0,0,0,0.1)" stroke-width="1"/><path d="M1366.5 489 V718" stroke="rgba(0,0,0,0.1)" stroke-width="1"/><path d="M1463.5 489 V718" stroke="rgba(0,0,0,0.1)" stroke-width="1"/><path d="M1561.5 489 V718" stroke="rgba(0,0,0,0.1)" stroke-width="1"/><path d="M1658.5 489 V718" stroke="rgba(0,0,0,0.1)" stroke-width="1"/><path d="M1756.5 489 V718" stroke="rgba(0,0,0,0.1)" stroke-width="1"/><path d="M1185.0 708.3 H1254.1" stroke="#1ea5f0" stroke-width="1.3"/><text transform="translate(1219.5 721) rotate(-12.5)" text-anchor="end" dominant-baseline="middle" font-size="12" fill="#666">04 - Monday</text><path d="M1282.5 708.3 H1351.6" stroke="#1ea5f0" stroke-width="1.3"/><text transform="translate(1317.0 721) rotate(-12.5)" text-anchor="end" dominant-baseline="middle" font-size="12" fill="#666">05 - Tuesday</text><path d="M1380.0 708.3 H1449.1" stroke="#1ea5f0" stroke-width="1.3"/><text transform="translate(1414.5 721) rotate(-12.5)" text-anchor="end" dominant-baseline="middle" font-size="12" fill="#666">06 - Wednesday</text><path d="M1477.5 708.3 H1546.6" stroke="#1ea5f0" stroke-width="1.3"/><text transform="translate(1512.0 721) rotate(-12.5)" text-anchor="end" dominant-baseline="middle" font-size="12" fill="#666">07 - Thursday</text><path d="M1575.0 708.3 H1644.1" stroke="#1ea5f0" stroke-width="1.3"/><text transform="translate(1609.5 721) rotate(-12.5)" text-anchor="end" dominant-baseline="middle" font-size="12" fill="#666">08 - Friday</text><path d="M1672.5 708.3 H1741.6" stroke="#1ea5f0" stroke-width="1.3"/><text transform="translate(1707.0 721) rotate(-12.5)" text-anchor="end" dominant-baseline="middle" font-size="12" fill="#666">09 - Saturday</text><path d="M1770.0 708.3 H1839.1" stroke="#1ea5f0" stroke-width="1.3"/><text transform="translate(1804.5 721) rotate(-12.5)" text-anchor="end" dominant-baseline="middle" font-size="12" fill="#666">10 - Sunday</text><rect x="1414.5" y="466.7" width="40.5" height="12.5" fill="#4bbbf2" stroke="#2aa8ef" stroke-width="1"/><text x="1461" y="475.9" font-size="12" fill="#666">Logged Hours</text></svg>
</body></html>
